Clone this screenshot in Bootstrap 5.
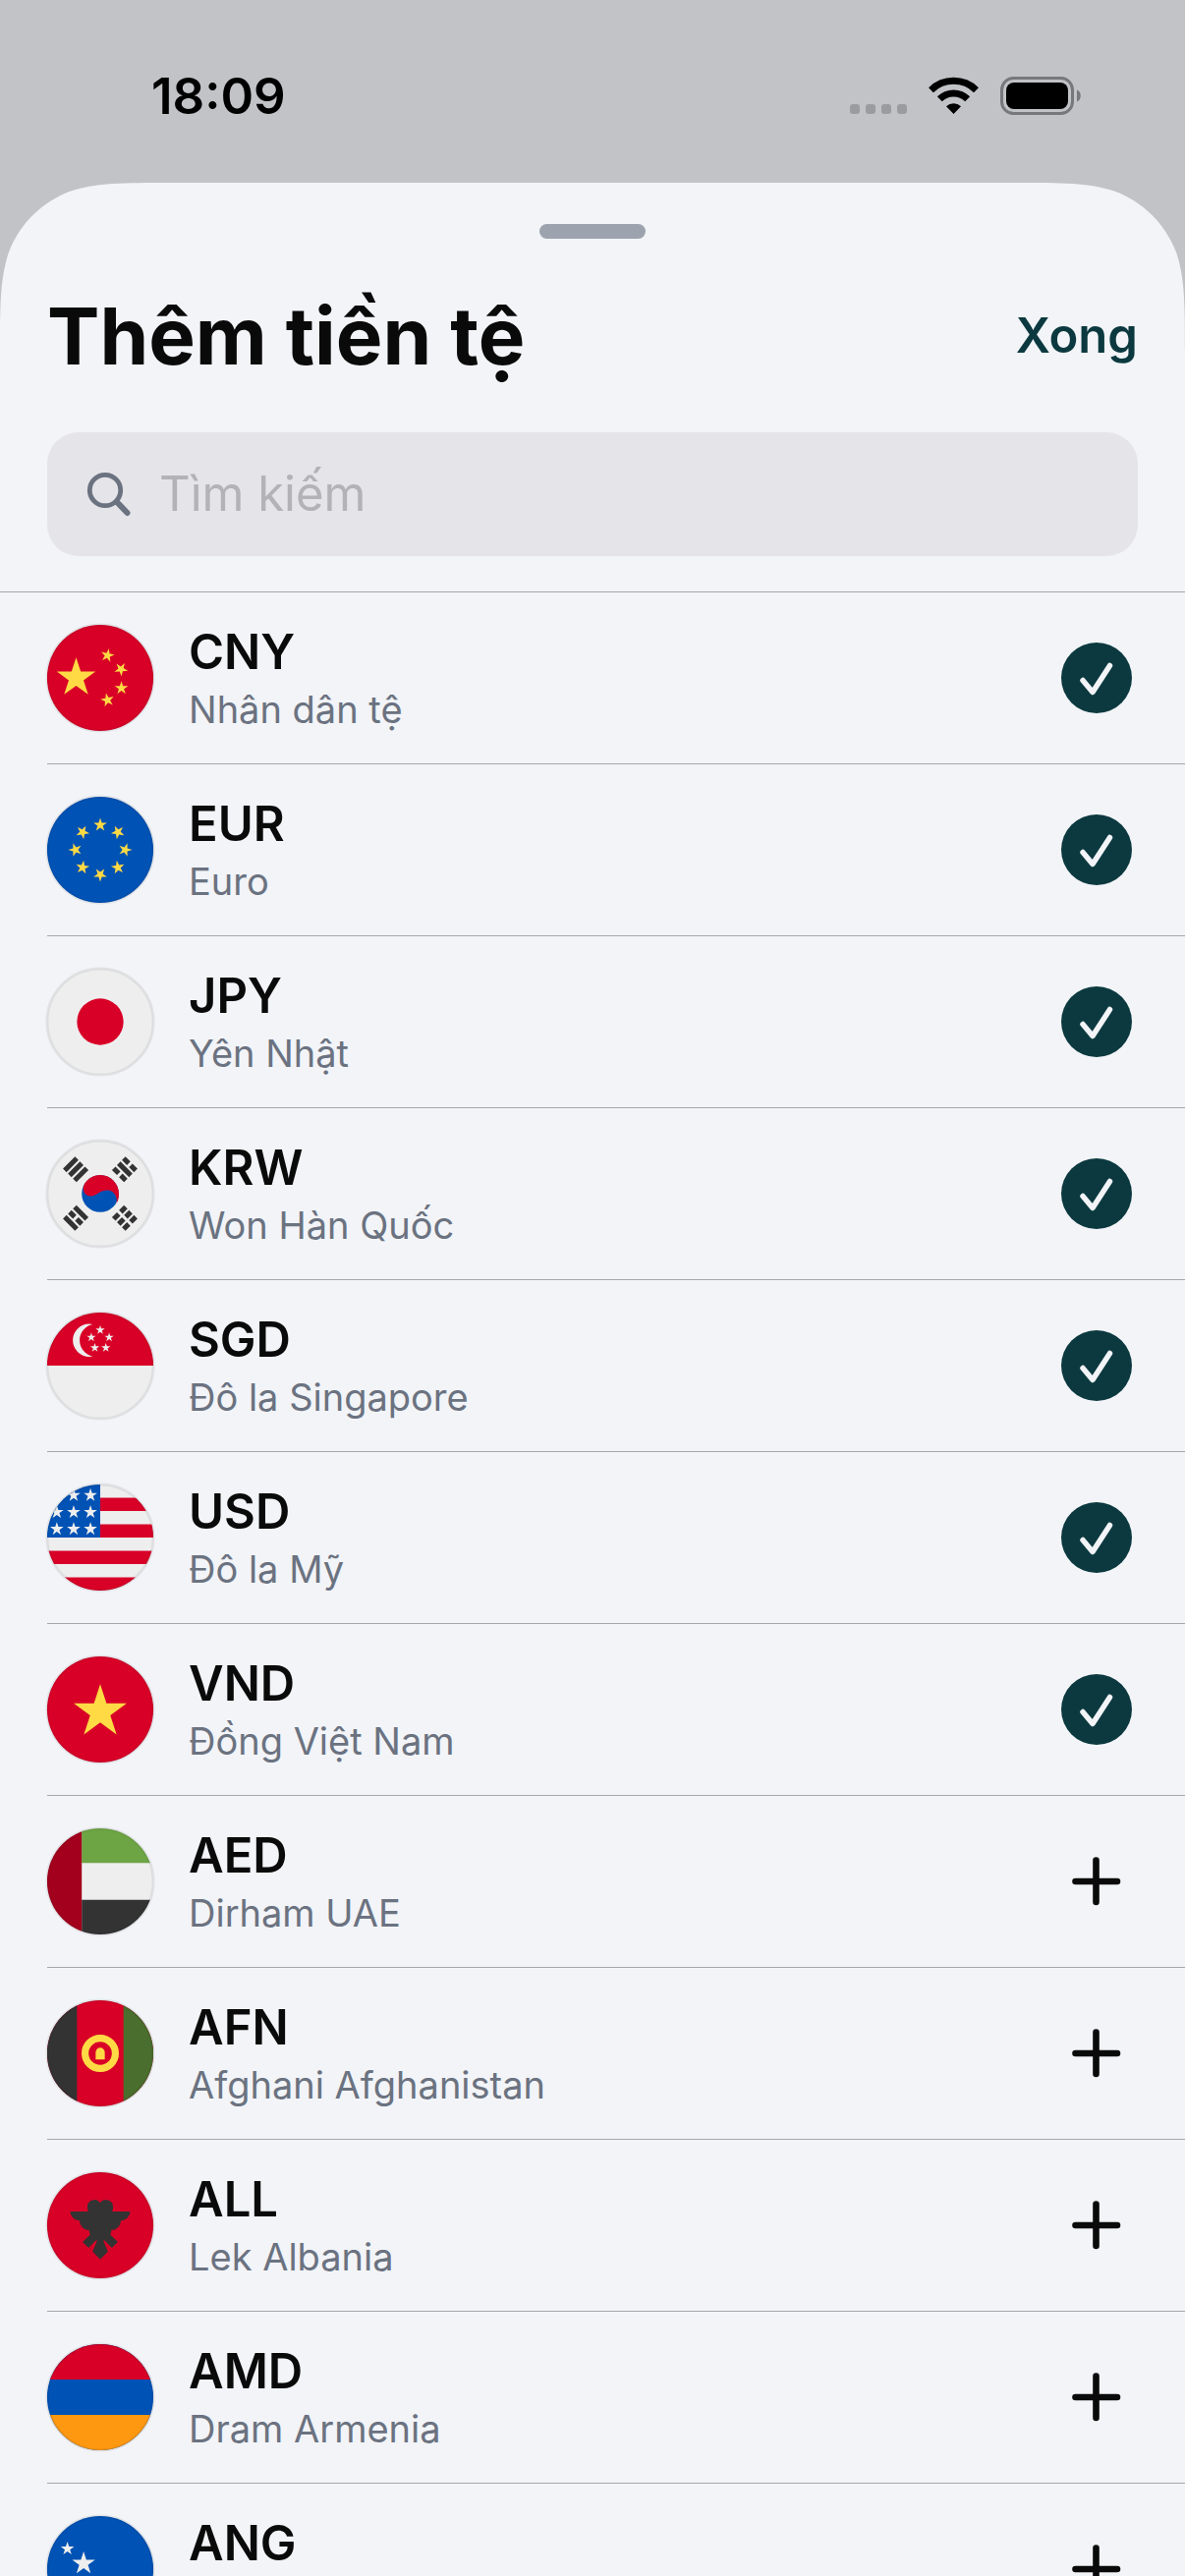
<!DOCTYPE html>
<html lang="vi">
<head>
<meta charset="utf-8">
<meta name="viewport" content="width=device-width, initial-scale=1">
<title>Thêm tiền tệ</title>
<link rel="stylesheet" href="https://cdn.jsdelivr.net/npm/bootstrap@5.3.0/dist/css/bootstrap.min.css">
<style>
  :root { --sheet: #f2f4f8; --scrim: #c2c3c7; --ink: #0a0a0a; --brand: #0b393f; --muted: #6b7280; --rule: #a5a7ac; }
  html, body { height: 100%; }
  body { background: var(--scrim); color: var(--ink); font-family: Inter, "Noto Sans", sans-serif; overflow: hidden; }
  .app-screen { height: 100vh; }
  .status-bar { height: 186px; padding: 10px 106px 0 154px; color: #000; }
  .clock { font-size: 51px; line-height: 60px; font-weight: 600; }
  .status-icons { height: 40px; }
  .sheet { background: var(--sheet); min-height: 0; }
  .corner { position: absolute; top: 0; width: 175px; height: 175px; fill: var(--scrim); }
  .corner-left { left: 0; }
  .corner-right { right: 0; transform: scaleX(-1); }
  .grabber { width: 108px; height: 15px; margin-top: 42px; border-radius: 8px; background: #9ca3af; }
  .sheet-head { padding: 48px 48px 36px; border-bottom: 1px solid var(--rule); }
  .sheet-title { font-size: 80px; line-height: 101px; font-weight: 700; }
  .done-btn { font-size: 49px; line-height: 60px; font-weight: 600; color: var(--brand); }
  .search-box { height: 126px; margin-top: 48px; padding: 0 40px; gap: 28px; border-radius: 32px; background: #e5e4e9; }
  .search-box input { font-size: 49px; line-height: 60px; color: var(--ink); outline: 0; }
  .search-box input::placeholder { color: #b3b2b7; opacity: 1; }
  .currency { height: 175px; margin-left: 48px; padding-right: 54px; gap: 36px; border-bottom: 1px solid var(--rule); }
  .flag { width: 112px; height: 112px; margin: 0 -2px; }
  .code { font-size: 49px; line-height: 60px; font-weight: 600; }
  .full-name { font-size: 38px; line-height: 48px; min-height: 48px; margin-top: 4px; color: var(--muted); }
  .toggle-btn svg { display: block; width: 72px; height: 72px; }
</style>
<script src="https://cdn.jsdelivr.net/npm/bootstrap@5.3.0/dist/js/bootstrap.bundle.min.js"></script>
</head>
<body>
<svg class="position-absolute" width="0" height="0" aria-hidden="true">
  <defs>
    <clipPath id="disc"><circle cx="256" cy="256" r="256"/></clipPath>
    <path id="star" d="M0-100 22.500-31H95L36.300 11.800 58.800 81 0 38.200-58.800 81-36.300 11.800-95-31H-22.500z"/>
    <symbol id="f-cny" viewBox="-9 -9 530 530"><g clip-path="url(#disc)"><path fill="#d80027" d="M0 0h512v512H0z"/><g fill="#ffda44">
      <use href="#star" transform="translate(140 256) scale(.98)"/>
      <use href="#star" transform="translate(291 148) rotate(12) scale(.34)"/><use href="#star" transform="translate(356 214) rotate(32) scale(.34)"/>
      <use href="#star" transform="translate(358 305) scale(.34)"/><use href="#star" transform="translate(291 363) rotate(-12) scale(.34)"/></g></g></symbol>
    <symbol id="f-eur" viewBox="-9 -9 530 530"><g clip-path="url(#disc)"><path fill="#0052b4" d="M0 0h512v512H0z"/><g fill="#ffda44">
      <use href="#star" transform="translate(256 136) scale(.34)"/><use href="#star" transform="translate(341 171) rotate(45) scale(.34)"/>
      <use href="#star" transform="translate(376 256) rotate(90) scale(.34)"/><use href="#star" transform="translate(341 341) rotate(135) scale(.34)"/>
      <use href="#star" transform="translate(256 376) rotate(180) scale(.34)"/><use href="#star" transform="translate(171 341) rotate(225) scale(.34)"/>
      <use href="#star" transform="translate(136 256) rotate(270) scale(.34)"/><use href="#star" transform="translate(171 171) rotate(315) scale(.34)"/></g></g></symbol>
    <symbol id="f-jpy" viewBox="-9 -9 530 530"><circle cx="256" cy="256" r="256" fill="#eee"/><circle cx="256" cy="256" r="112" fill="#d80027"/></symbol>
    <symbol id="f-krw" viewBox="-9 -9 530 530"><circle cx="256" cy="256" r="256" fill="#eee"/>
      <circle cx="256" cy="256" r="89" fill="#0052b4"/>
      <path fill="#d80027" d="M181 207C208 166 262 154 304 180c41 26 54 82 31 122 6-32-14-62-45-62-38 0-50 28-78 28-32 0-48-32-31-61z"/>
      <g fill="none" stroke="#333" stroke-width="24">
        <path d="M85 144l58-58M109 168l58-58M133 192l58-58"/>
        <path d="M85 368l58 58M133 320l58 58M109 344l24 24m10 10l24 24"/>
        <path d="M369 86l24 24m10 10l24 24M345 110l58 58M321 134l24 24m10 10l24 24"/>
        <path d="M321 378l24-24m10-10l24-24M345 402l24-24m10-10l24-24M369 426l24-24m10-10l24-24"/></g></symbol>
    <symbol id="f-sgd" viewBox="-9 -9 530 530"><g clip-path="url(#disc)"><path fill="#eee" d="M0 0h512v512H0z"/><path fill="#d80027" d="M0 0h512v256H0z"/>
      <path fill="#eee" d="M157 134c0-38 27-70 63-77-6-1-11-2-17-2a79 79 0 0 0 0 158c6 0 11-1 17-2-36-7-63-39-63-77z"/><g fill="#eee">
      <use href="#star" transform="translate(256 85) scale(.23)"/><use href="#star" transform="translate(213 120) scale(.23)"/><use href="#star" transform="translate(299 120) scale(.23)"/>
      <use href="#star" transform="translate(230 170) scale(.23)"/><use href="#star" transform="translate(283 170) scale(.23)"/></g></g></symbol>
    <symbol id="f-usd" viewBox="-9 -9 530 530"><g clip-path="url(#disc)"><path fill="#eee" d="M0 0h512v512H0z"/>
      <path fill="#d80027" d="M256 64h256v64H256zM256 192h256v64H256zM0 320h512v64H0zM0 448h512v64H0z"/><path fill="#0052b4" d="M0 0h256v256H0z"/><g fill="#eee">
      <use href="#star" transform="translate(128 52) scale(.34)"/><use href="#star" transform="translate(209 52) scale(.34)"/>
      <use href="#star" transform="translate(47 134) scale(.34)"/><use href="#star" transform="translate(128 134) scale(.34)"/><use href="#star" transform="translate(209 134) scale(.34)"/>
      <use href="#star" transform="translate(47 215) scale(.34)"/><use href="#star" transform="translate(128 215) scale(.34)"/><use href="#star" transform="translate(209 215) scale(.34)"/></g></g></symbol>
    <symbol id="f-vnd" viewBox="-9 -9 530 530"><circle cx="256" cy="256" r="256" fill="#d80027"/><use href="#star" fill="#ffda44" transform="translate(256 268) scale(1.340)"/></symbol>
    <symbol id="f-aed" viewBox="-9 -9 530 530"><g clip-path="url(#disc)"><path fill="#eee" d="M0 0h512v512H0z"/><path fill="#6da544" d="M167 0h345v167H167z"/><path fill="#333" d="M167 345h345v167H167z"/><path fill="#a2001d" d="M0 0h167v512H0z"/></g></symbol>
    <symbol id="f-afn" viewBox="-9 -9 530 530"><g clip-path="url(#disc)"><path fill="#d80027" d="M0 0h512v512H0z"/><path fill="#333" d="M0 0h144v512H0z"/><path fill="#496e2d" d="M368 0h144v512H368z"/>
      <circle cx="256" cy="256" r="73" fill="none" stroke="#ffda44" stroke-width="34"/><path fill="#ffda44" d="M234 285v-34a22 22 0 0 1 44 0v34z"/></g></symbol>
    <symbol id="f-all" viewBox="-9 -9 530 530"><circle cx="256" cy="256" r="256" fill="#d80027"/>
      <path fill="#333" d="M400 190H312c4-6 6-14 6-22a34 34 0 0 0-62-20 34 34 0 0 0-62 20c0 8 2 16 6 22H112c0 24 21 43 45 43 0 25 20 46 45 46 0 8 2 15 6 22l-37 36 29 28 36-37 5 2-22 53 37 37 37-37-22-53 5-2 36 37 29-28-37-36c4-7 6-14 6-22 25 0 45-21 45-46 24 0 45-19 45-43z"/></symbol>
    <symbol id="f-amd" viewBox="-9 -9 530 530"><g clip-path="url(#disc)"><path fill="#0052b4" d="M0 0h512v512H0z"/><path fill="#d80027" d="M0 0h512v171H0z"/><path fill="#ff9811" d="M0 341h512v171H0z"/></g></symbol>
    <symbol id="f-ang" viewBox="-9 -9 530 530"><g clip-path="url(#disc)"><path fill="#0052b4" d="M0 0h512v512H0z"/><path fill="#ffda44" d="M0 322h512v66H0z"/><g fill="#eee">
      <use href="#star" transform="translate(98 158) scale(.34)"/><use href="#star" transform="translate(176 229) scale(.58)"/></g></g></symbol>
    <symbol id="rim" viewBox="-9 -9 530 530"><circle cx="256" cy="256" r="256" fill="none" stroke="#000" stroke-opacity=".07" stroke-width="14"/></symbol>
    <symbol id="i-check" viewBox="0 0 72 72"><circle cx="36" cy="36" r="36" fill="#0b393f"/><path d="M22 38.500 32 50.500 49.500 23.500" fill="none" stroke="#f2f4f8" stroke-width="5.500" stroke-linecap="round" stroke-linejoin="round"/></symbol>
    <symbol id="i-plus" viewBox="0 0 72 72"><path d="M35.500 14.500v42.500M14.500 36h42.500" fill="none" stroke="#0a0a0a" stroke-width="6.600" stroke-linecap="round"/></symbol>
  </defs>
</svg>

<div class="app-screen d-flex flex-column">
  <header class="status-bar d-flex flex-shrink-0 align-items-center justify-content-between">
    <time class="clock">18:09</time>
    <svg class="status-icons" width="236" height="40" viewBox="0 0 236 40" aria-label="Wi-Fi, pin đầy">
      <g fill="#9b9c9f"><rect x="1" y="28" width="10" height="10" rx="3"/><rect x="17" y="28" width="10" height="10" rx="3"/><rect x="33" y="28" width="10" height="10" rx="3"/><rect x="49" y="28" width="10" height="10" rx="3"/></g>
      <path d="M83.500 14.200a33 33 0 0 1 46 0M92.300 23.300a20 20 0 0 1 28.400 0" transform="translate(0 -.5)" fill="none" stroke="#000" stroke-width="7"/>
      <path d="M106.500 38 99 30.300a11 11 0 0 1 15 0z"/>
      <rect x="155.500" y="1.500" width="72" height="36" rx="12" fill="none" stroke="#77787b" stroke-width="3"/>
      <rect x="160" y="6" width="63" height="27" rx="8"/><path d="M232 13.500c5 1.500 5 10.500 0 12z" fill="#77787b"/>
    </svg>
  </header>

  <main class="sheet position-relative flex-grow-1 overflow-hidden">
    <svg class="corner corner-left" viewBox="0 0 175 175" aria-hidden="true"><path d="M0 0H174C124 0 99 0 72 8.500 42.500 19.300 19.300 42.500 8.500 72 0 99 0 124 0 174z"/></svg>
    <svg class="corner corner-right" viewBox="0 0 175 175" aria-hidden="true"><path d="M0 0H174C124 0 99 0 72 8.500 42.500 19.300 19.300 42.500 8.500 72 0 99 0 124 0 174z"/></svg>
    <div class="grabber mx-auto"></div>
    <div class="sheet-head">
      <div class="d-flex align-items-center justify-content-between">
        <h1 class="sheet-title mb-0">Thêm tiền tệ</h1>
        <button type="button" class="done-btn border-0 bg-transparent p-0">Xong</button>
      </div>
      <div class="search-box d-flex align-items-center">
        <svg width="46" height="46" viewBox="0 0 46 46" aria-hidden="true"><circle cx="19" cy="19" r="15.700" fill="none" stroke="#6b7280" stroke-width="4.800"/><path d="M31 31 41.500 42" stroke="#6b7280" stroke-width="6" stroke-linecap="round"/></svg>
        <input type="search" class="flex-grow-1 border-0 bg-transparent p-0" aria-label="Tìm kiếm" placeholder="Tìm kiếm">
      </div>
    </div>
    <ul class="list-unstyled mb-0" id="currencies"></ul>
  </main>
</div>

<script>
  // Each entry: code, Vietnamese name, already added?
  const currencies = [
    ['CNY', 'Nhân dân tệ', true], ['EUR', 'Euro', true], ['JPY', 'Yên Nhật', true], ['KRW', 'Won Hàn Quốc', true],
    ['SGD', 'Đô la Singapore', true], ['USD', 'Đô la Mỹ', true], ['VND', 'Đồng Việt Nam', true],
    ['AED', 'Dirham UAE', false], ['AFN', 'Afghani Afghanistan', false], ['ALL', 'Lek Albania', false],
    ['AMD', 'Dram Armenia', false], ['ANG', '', false]
  ];
  document.getElementById('currencies').innerHTML = currencies.map(([code, name, added]) => `
    <li class="currency d-flex align-items-center">
      <svg class="flag flex-shrink-0" aria-hidden="true"><use href="#f-${code.toLowerCase()}"/><use href="#rim"/></svg>
      <div class="flex-grow-1"><div class="code">${code}</div><div class="full-name">${name}</div></div>
      <button type="button" class="toggle-btn border-0 bg-transparent p-0" aria-pressed="${added}" aria-label="${code}"><svg aria-hidden="true"><use href="#i-${added ? 'check' : 'plus'}"/></svg></button>
    </li>`).join('');
</script>
</body>
</html>
